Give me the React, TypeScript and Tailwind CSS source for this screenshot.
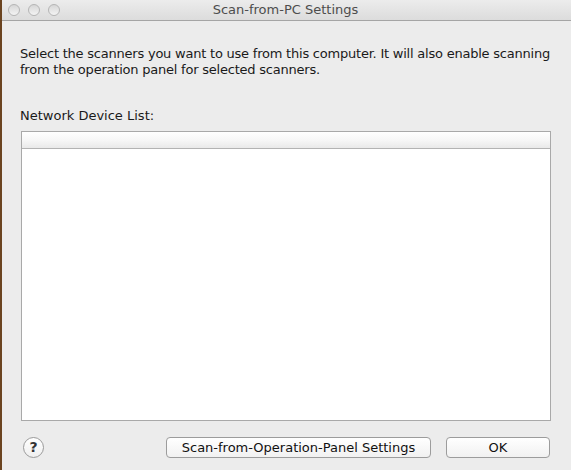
export default function App() {
  return (
    <div className="w-[571px] h-[470px] flex bg-[#6b4420] overflow-hidden font-['DejaVu_Sans',sans-serif]">
      <div className="ml-[2px] flex-1 min-w-0 flex flex-col bg-[#ececec]">
        {/* title bar */}
        <div className="h-[21px] relative flex items-center justify-center border-b border-[#a5a5a5] bg-gradient-to-b from-[#ececec] to-[#dcdcdc]">
          <div className="absolute left-[6px] top-[4px] flex gap-[8px]">
            <span className="w-[12px] h-[12px] rounded-full border border-[#b5b5b5] bg-gradient-to-b from-[#d6d6d6] to-[#f4f4f4]" />
            <span className="w-[12px] h-[12px] rounded-full border border-[#b5b5b5] bg-gradient-to-b from-[#d6d6d6] to-[#f4f4f4]" />
            <span className="w-[12px] h-[12px] rounded-full border border-[#b5b5b5] bg-gradient-to-b from-[#d6d6d6] to-[#f4f4f4]" />
          </div>
          <span className="text-[13px] text-[#4d4d4d] ml-[-2px]">Scan-from-PC Settings</span>
        </div>

        <div className="flex-1 min-w-0 flex flex-col pl-[18px] pr-[20px] pt-[25px] text-[13px] text-[#1a1a1a]">
          <p className="leading-[16px] tracking-[-0.22px] whitespace-nowrap">
            Select the scanners you want to use from this computer. It will also enable scanning
            <br />
            from the operation panel for selected scanners.
          </p>
          <p className="mt-[30px] leading-[16px]">Network Device List:</p>

          <div className="mt-[7px] ml-[1px] h-[290px] flex flex-col bg-white border border-[#a9a9a9]">
            <div className="h-[17px] border-b border-[#b3b3b3] bg-gradient-to-b from-white via-[#f7f7f7] to-[#e9e9e9]" />
          </div>

          <div className="mt-[16px] flex items-center">
            <span className="ml-[3px] w-[21px] h-[21px] rounded-full border border-[#9a9a9a] bg-gradient-to-b from-white to-[#efefef] flex items-center justify-center text-[14px] font-bold text-[#333]">
              ?
            </span>
            <button className="ml-auto w-[265px] h-[21px] rounded-[4px] border border-[#9c9c9c] bg-gradient-to-b from-white to-[#f1f1f1] text-[13px] text-[#111]">
              Scan-from-Operation-Panel Settings
            </button>
            <button className="ml-[15px] mr-[1px] w-[104px] h-[21px] rounded-[4px] border border-[#9c9c9c] bg-gradient-to-b from-white to-[#f1f1f1] text-[13px] text-[#111]">
              OK
            </button>
          </div>
        </div>
      </div>
    </div>
  );
}
